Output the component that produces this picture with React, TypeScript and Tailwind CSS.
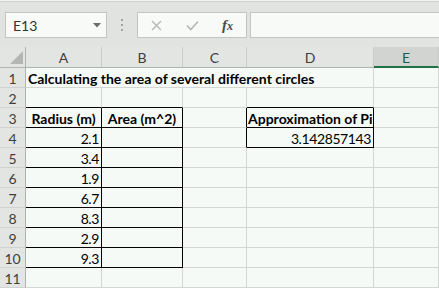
import React from "react";

const FONT = { fontFamily: "Lato, 'Liberation Sans', sans-serif" };

function RowHeader({ n }: { n: number }) {
  return (
    <div className="flex h-[20px] items-center justify-center border-r border-b border-r-[#b1b3b1] border-b-[#d0d2d0] bg-[#e3e5e3] text-[14px] text-[#3e3e3e]">
      <span className="pt-[1px]">{n}</span>
    </div>
  );
}

function Cell({
  children,
  className = "",
  align = "left",
}: {
  children?: React.ReactNode;
  className?: string;
  align?: "left" | "right" | "center";
}) {
  const j =
    align === "right"
      ? "justify-end pr-[2px] tracking-[-0.4px]"
      : align === "center"
      ? "justify-center"
      : "justify-start pl-[2px]";
  return (
    <div
      className={`flex h-[20px] items-center whitespace-nowrap border-r border-b border-[#d4d6d4] bg-[#f6faf6] text-[14px] text-black ${j} ${className}`}
    >
      <span className="pt-[2px]">{children}</span>
    </div>
  );
}

export default function App() {
  const radii = ["2.1", "3.4", "1.9", "6.7", "8.3", "2.9", "9.3"];
  return (
    <div className="h-[288px] w-[439px] overflow-hidden bg-[#e1e3e1]" style={FONT}>
      {/* formula bar */}
      <div className="h-[47px] border-t border-t-[#f2f3f2]">
        <div className="h-[1px] bg-[#cfd1cf]" />
        <div className="flex items-center pt-[10px]">
          <div className="ml-[5px] flex h-[26px] w-[102px] items-center justify-between border border-[#c3c5c3] bg-[#f7faf7] pl-[7px] pr-[5px] text-[14px] text-[#333]">
            <span className="pt-[1px]">E13</span>
            <svg width="8" height="5" viewBox="0 0 8 5">
              <path d="M0 0 H8 L4 4.5 Z" fill="#6b6b6b" />
            </svg>
          </div>
          <div className="ml-[14px] flex flex-col gap-[3px]">
            <div className="h-[2px] w-[2px] bg-[#a3a5a3]" />
            <div className="h-[2px] w-[2px] bg-[#a3a5a3]" />
            <div className="h-[2px] w-[2px] bg-[#a3a5a3]" />
          </div>
          <div className="ml-[14px] flex h-[26px] w-[110px] items-center border border-[#c3c5c3] bg-[#f7faf7]">
            <svg className="ml-[13px]" width="11" height="11" viewBox="0 0 11 11">
              <path d="M1 1 L10 10 M10 1 L1 10" stroke="#b5b7b5" strokeWidth="1.4" />
            </svg>
            <svg className="ml-[24px]" width="13" height="11" viewBox="0 0 13 11">
              <path d="M1 5.5 L4.8 9.5 L12 1.5" stroke="#b5b7b5" strokeWidth="1.6" fill="none" />
            </svg>
            <span
              className="ml-[23px] text-[15px] font-bold italic text-[#4a4a4a]"
              style={{ fontFamily: "'Liberation Serif', serif" }}
            >
              f<span className="text-[12px]">x</span>
            </span>
          </div>
          <div className="ml-[3px] h-[26px] flex-1 border border-r-0 border-[#c3c5c3] bg-[#f7faf7]" />
        </div>
      </div>

      {/* grid */}
      <div className="grid grid-cols-[26px_76px_81px_64px_127px_65px]">
        {/* header row */}
        <div className="relative h-[21px] border-r border-b border-r-[#b1b3b1] border-b-[#b1b3b1] bg-[#e3e5e3]">
          <svg className="absolute left-[10px] top-[4px]" width="13" height="13" viewBox="0 0 13 13">
            <path d="M13 0 V13 H0 Z" fill="#b4b6b4" />
          </svg>
        </div>
        {["A", "B", "C", "D"].map((c) => (
          <div
            key={c}
            className="flex h-[21px] items-center justify-center border-r border-b border-r-[#c9cbc9] border-b-[#b1b3b1] bg-[#e3e5e3] text-[14px] text-[#3e3e3e]"
          >
            <span className="pt-[1px]">{c}</span>
          </div>
        ))}
        <div className="flex h-[21px] items-center justify-center border-r border-b-2 border-r-[#c9cbc9] border-b-[#217346] bg-[#d2d4d2] text-[14px] text-[#1d5e3c]">
          <span className="pt-[2px]">E</span>
        </div>

        {/* row 1 */}
        <RowHeader n={1} />
        <div className="col-span-4 flex h-[20px] items-center whitespace-nowrap border-r border-b border-[#d4d6d4] bg-[#f6faf6] pl-[2px] text-[14px] font-bold text-black">
          <span className="pt-[2px]">Calculating the area of several different circles</span>
        </div>
        <Cell />

        {/* row 2 */}
        <RowHeader n={2} />
        <Cell className="border-b-black" />
        <Cell className="border-b-black" />
        <Cell />
        <Cell className="border-b-black" />
        <Cell />

        {/* row 3 */}
        <RowHeader n={3} />
        <Cell className="border-r-black border-b-black bg-[#c6e0b4] font-bold" align="center">
          Radius (m)
        </Cell>
        <Cell className="border-r-black border-b-black bg-[#c6e0b4] font-bold" align="center">
          Area (m^2)
        </Cell>
        <Cell className="border-r-black" />
        <Cell className="border-r-black border-b-black bg-[#c6e0b4] font-bold !pl-[1px]">Approximation of Pi</Cell>
        <Cell />

        {/* row 4 */}
        <RowHeader n={4} />
        <Cell className="border-r-black border-b-black" align="right">
          {radii[0]}
        </Cell>
        <Cell className="border-r-black border-b-black" />
        <Cell className="border-r-black" />
        <Cell className="border-r-black border-b-black" align="right">
          3.142857143
        </Cell>
        <Cell />

        {radii.slice(1).map((r, i) => (
          <React.Fragment key={i}>
            <RowHeader n={i + 5} />
            <Cell className="border-r-black border-b-black" align="right">
              {r}
            </Cell>
            <Cell className="border-r-black border-b-black" />
            <Cell />
            <Cell />
            <Cell />
          </React.Fragment>
        ))}

        {/* row 11 */}
        <RowHeader n={11} />
        <Cell />
        <Cell />
        <Cell />
        <Cell />
        <Cell />
      </div>
    </div>
  );
}
